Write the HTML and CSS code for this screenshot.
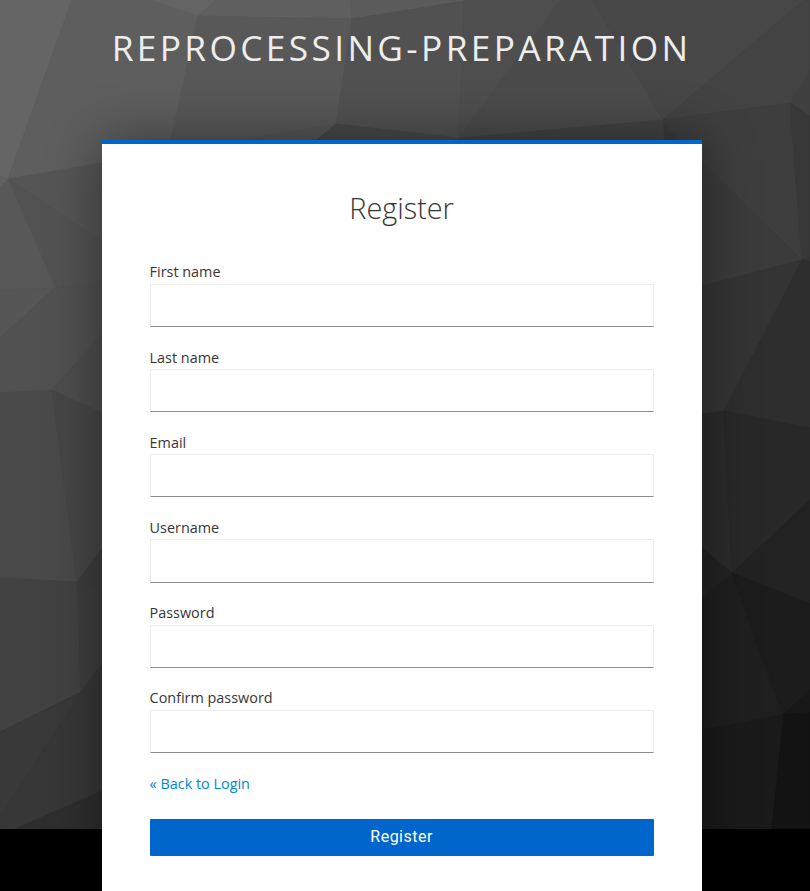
FILE: index.html
```html
<!DOCTYPE html>
<html lang="en">
<head>
<meta charset="utf-8">
<title>Register</title>
<link rel="stylesheet" href="styles.css">
</head>
<body>
<svg class="backdrop" viewBox="0 0 810 829" preserveAspectRatio="none" aria-hidden="true">
  <rect width="810" height="829" fill="#444"/>
  <polygon fill="#656565" stroke="#656565" points="0,0 72,0 8,179 0,176"/>
  <polygon fill="#606060" stroke="#606060" points="0,176 8,179 0,187"/>
  <polygon fill="#5e5e5e" stroke="#5e5e5e" points="72,0 153,0 198,16 170,144 102,163 8,179"/>
  <polygon fill="#646464" stroke="#646464" points="153,0 216,0 198,16"/>
  <polygon fill="#5f5f5f" stroke="#5f5f5f" points="216,0 351,0 352,19 198,16"/>
  <polygon fill="#5b5b5b" stroke="#5b5b5b" points="351,0 467,0 464,1 352,19"/>
  <polygon fill="#585858" stroke="#585858" points="198,16 352,19 336,124 314,144 170,144"/>
  <polygon fill="#555" stroke="#555" points="336,124 230,142 314,142"/>
  <polygon fill="#515151" stroke="#515151" points="352,19 464,1 459,138 336,124"/>
  <polygon fill="#484848" stroke="#484848" points="336,124 459,138 459,144 312,144"/>
  <polygon fill="#4e4e4e" stroke="#4e4e4e" points="464,1 467,0 561,0 459,138"/>
  <polygon fill="#4b4b4b" stroke="#4b4b4b" points="561,0 592,0 663,120 459,138"/>
  <polygon fill="#424242" stroke="#424242" points="459,138 663,120 665,144 459,144"/>
  <polygon fill="#474747" stroke="#474747" points="592,0 804,0 663,120"/>
  <polygon fill="#434343" stroke="#434343" points="804,0 810,0 810,70 790,103 663,120"/>
  <polygon fill="#3e3e3e" stroke="#3e3e3e" points="663,120 790,103 802,260 702,162 665,144"/>
  <polygon fill="#404040" stroke="#404040" points="790,103 810,70 810,116"/>
  <polygon fill="#383838" stroke="#383838" points="790,103 810,116 810,257 802,260"/>
  <polygon fill="#3b3b3b" stroke="#3b3b3b" points="665,125 702,162 802,260 702,286 665,286"/>
  <polygon fill="#343434" stroke="#343434" points="702,286 802,260 724,411 702,414"/>
  <polygon fill="#353535" stroke="#353535" points="802,260 810,257 810,262"/>
  <polygon fill="#2e2e2e" stroke="#2e2e2e" points="802,260 810,262 810,428 724,411"/>
  <polygon fill="#2b2b2b" stroke="#2b2b2b" points="702,414 724,411 732,573 702,548"/>
  <polygon fill="#282828" stroke="#282828" points="724,411 810,428 810,500 732,573"/>
  <polygon fill="#222" stroke="#222" points="732,573 810,500 810,604"/>
  <polygon fill="#232323" stroke="#232323" points="702,548 732,573 702,598"/>
  <polygon fill="#1f1f1f" stroke="#1f1f1f" points="732,573 702,598 702,730 783,715"/>
  <polygon fill="#1c1c1c" stroke="#1c1c1c" points="732,573 810,604 810,690 783,715"/>
  <polygon fill="#181818" stroke="#181818" points="783,715 810,690 810,713"/>
  <polygon fill="#131313" stroke="#131313" points="783,715 810,713 810,829 771,829"/>
  <polygon fill="#1a1a1a" stroke="#1a1a1a" points="702,730 783,715 771,829 702,829"/>
  <polygon fill="#555" stroke="#555" points="8,179 102,163 102,242"/>
  <polygon fill="#525252" stroke="#525252" points="8,179 102,242 102,284 55,288"/>
  <polygon fill="#585858" stroke="#585858" points="0,187 8,179 55,288 0,290"/>
  <polygon fill="#565656" stroke="#565656" points="55,288 0,290 0,338"/>
  <polygon fill="#515151" stroke="#515151" points="55,288 0,338 0,393 52,390 102,334 102,284"/>
  <polygon fill="#4d4d4d" stroke="#4d4d4d" points="52,390 102,334 102,413"/>
  <polygon fill="#4a4a4a" stroke="#4a4a4a" points="52,390 0,393 0,578 77,582"/>
  <polygon fill="#464646" stroke="#464646" points="52,390 102,413 102,548 77,582"/>
  <polygon fill="#3d3d3d" stroke="#3d3d3d" points="77,582 102,548 102,592"/>
  <polygon fill="#424242" stroke="#424242" points="0,578 77,582 81,692 0,732"/>
  <polygon fill="#3e3e3e" stroke="#3e3e3e" points="77,582 102,592 102,664 81,692"/>
  <polygon fill="#393939" stroke="#393939" points="81,692 0,732 0,817"/>
  <polygon fill="#373737" stroke="#373737" points="81,692 0,817 0,829 15,829 102,791 102,664"/>
  <polygon fill="#2e2e2e" stroke="#2e2e2e" points="15,829 102,791 102,829"/>
</svg>
<div class="page">
  <header class="realm">reprocessing-preparation</header>
  <main class="card">
    <h1 class="card-title">Register</h1>
    <form>
      <div class="field"><label for="firstName">First name</label><input id="firstName" type="text"></div>
      <div class="field"><label for="lastName">Last name</label><input id="lastName" type="text"></div>
      <div class="field"><label for="email">Email</label><input id="email" type="text"></div>
      <div class="field"><label for="username">Username</label><input id="username" type="text"></div>
      <div class="field"><label for="password">Password</label><input id="password" type="password"></div>
      <div class="field"><label for="confirm">Confirm password</label><input id="confirm" type="password"></div>
      <div class="back"><a href="#">« Back to Login</a></div>
      <button class="submit" type="button">Register</button>
    </form>
  </main>
</div>
</body>
</html>
```
FILE: styles.css
```css
* { box-sizing: border-box; }
html { background: #000; height: 100%; overflow: hidden; }
body {
  margin: 0;
  height: 100%;
  overflow: hidden;
  color: #363636;
  font: 14.4px/21.6px "Open Sans", sans-serif;
}
.backdrop {
  position: absolute;
  top: 0;
  left: 0;
  width: 810px;
  height: 829px;
}
.backdrop polygon { stroke-width: .8px; }
.page { position: relative; width: 803.2px; }
.realm {
  height: 140px;
  padding-top: 23px;
  color: #ededed;
  font-size: 35.3px;
  line-height: 48px;
  letter-spacing: 3.35px;
  text-align: center;
  text-transform: uppercase;
  white-space: nowrap;
}
.card {
  width: 600px;
  height: 751px;
  margin: 0 auto;
  padding: 44px 48px 0;
  background: #fff;
  border-top: 4px solid #06c;
  box-shadow: 0 0 50px rgba(0, 0, 0, .42);
}
.card-title {
  margin: 0 0 33.35px;
  font-size: 28.8px;
  font-weight: 300;
  line-height: 40px;
  text-align: center;
}
.field { height: 85.2px; }
.field label { display: block; height: 22.45px; }
.field input {
  display: block;
  width: 504px;
  height: 43.2px;
  padding: 0 8px;
  background: #fff;
  border: 1px solid #ededed;
  border-bottom-color: #8a8d90;
  border-radius: 0;
}
.back { height: 46.4px; padding-top: .4px; }
.back a { color: #0088ce; text-decoration: none; }
.submit {
  display: block;
  width: 504px;
  height: 37px;
  padding: 0 0 1px;
  color: #fff;
  background: #06c;
  border: 0;
  border-radius: 1px;
  font: 16px/36px Roboto, sans-serif;
  letter-spacing: .5px;
}
```
